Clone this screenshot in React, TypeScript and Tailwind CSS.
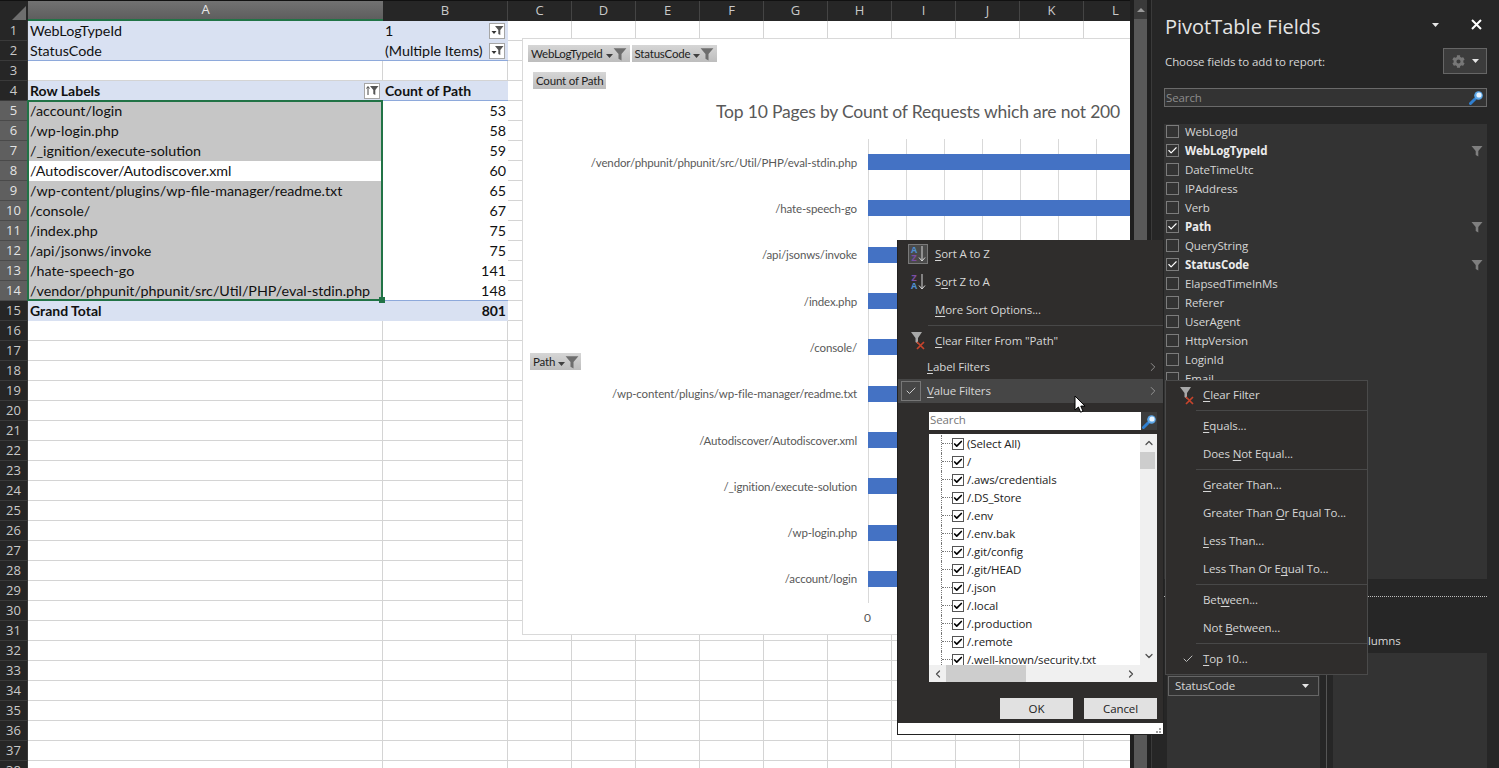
import React from "react";
import { ChevronRight, ChevronUp, ChevronDown, ChevronLeft, Check } from "lucide-react";
import { FaCog } from "react-icons/fa";

const UI = "font-['Open_Sans',sans-serif]";
const SHEET = "font-[Lato,sans-serif]";

const Acc = ({ s }: { s: string }) => {
  const [a, b] = s.split("&");
  if (b === undefined) return <>{a}</>;
  return (
    <>
      {a}
      <u className="underline-offset-2">{b[0]}</u>
      {b.slice(1)}
    </>
  );
};

const Funnel = ({ size = 12, color = "#7f7f7f" }: { size?: number; color?: string }) => (
  <svg width={size} height={size} viewBox="0 0 12 12" className="shrink-0">
    <path d="M0.5 1h11L7.3 6v5.5L4.7 10V6z" fill={color} />
  </svg>
);

const Caret = ({ color = "#404040", w = 7 }: { color?: string; w?: number }) => (
  <svg width={w} height={4} viewBox="0 0 7 4" className="shrink-0">
    <path d="M0 0h7L3.5 4z" fill={color} />
  </svg>
);

const ClearFunnel = () => (
  <svg width={16} height={18} viewBox="0 0 16 18" className="shrink-0">
    <path d="M0 0h11L7 6v6L4.5 10V6z" fill="#a8a8a8" />
    <path d="M6 10l7 7M13 10l-7 7" stroke="#c8442c" strokeWidth="1.7" />
  </svg>
);

const Magnifier = () => (
  <svg width={15} height={15} viewBox="0 0 15 15" className="shrink-0">
    <path d="M1.5 13.5L6 9" stroke="#2f7fd0" strokeWidth="3" strokeLinecap="round" />
    <circle cx="9.5" cy="5.5" r="4.3" fill="#5aa5e6" />
    <circle cx="10" cy="5" r="2.6" fill="#e8f4ff" />
  </svg>
);

const FilterBtn = ({ sorted }: { sorted?: boolean }) => (
  <div className="w-[16px] h-[16px] shrink-0 bg-white border border-[#a6a6a6] flex items-center justify-center">
    {sorted ? (
      <svg width={13} height={11} viewBox="0 0 13 11">
        <path d="M2 10V2M0.5 3.5L2 1.5l1.5 2" stroke="#444" fill="none" strokeWidth="1" />
        <path d="M4 1h8.5L9.3 5v5L7.3 9V5z" fill="#555" />
      </svg>
    ) : (
      <svg width={13} height={11} viewBox="0 0 13 11">
        <path d="M0.5 6h5L3 9z" fill="#333" />
        <path d="M4 1h8.5L9.3 5v5L7.3 9V5z" fill="#555" />
      </svg>
    )}
  </div>
);

const colLetters = ["C", "D", "E", "F", "G", "H", "I", "J", "K", "L"];
const rows = Array.from({ length: 38 }, (_, i) => i + 1);
const labels: Record<number, [string, string]> = {
  5: ["/account/login", "53"],
  6: ["/wp-login.php", "58"],
  7: ["/_ignition/execute-solution", "59"],
  8: ["/Autodiscover/Autodiscover.xml", "60"],
  9: ["/wp-content/plugins/wp-file-manager/readme.txt", "65"],
  10: ["/console/", "67"],
  11: ["/index.php", "75"],
  12: ["/api/jsonws/invoke", "75"],
  13: ["/hate-speech-go", "141"],
  14: ["/vendor/phpunit/phpunit/src/Util/PHP/eval-stdin.php", "148"],
};

const PIVOT = "bg-[#d9e1f2]";
const GRID = "border-[#d4d4d4]";

function SheetRow({ n }: { n: number }) {
  const selected = n >= 5 && n <= 14;
  let a: React.ReactNode = null;
  let b: React.ReactNode = null;
  let aCls = `bg-white border-r border-b ${GRID}`;
  let bCls = `bg-white border-r border-b ${GRID}`;
  if (n === 1 || n === 2) {
    aCls = `${PIVOT} ${n === 2 ? "border-b border-[#8ea9db]" : ""}`;
    bCls = `${PIVOT} ${n === 2 ? "border-b border-[#8ea9db]" : ""}`;
    a = n === 1 ? "WebLogTypeId" : "StatusCode";
    b = (
      <div className="flex items-center justify-between pr-[1px]">
        <span>{n === 1 ? "1" : "(Multiple Items)"}</span>
        <FilterBtn />
      </div>
    );
  } else if (n === 4) {
    aCls = `${PIVOT} border-b border-[#8ea9db] font-bold text-[14px]`;
    bCls = `${PIVOT} border-b border-[#8ea9db] font-bold text-[14px]`;
    a = (
      <div className="flex items-center justify-between pr-[1px]">
        <span>Row Labels</span>
        <FilterBtn sorted />
      </div>
    );
    b = "Count of Path";
  } else if (labels[n]) {
    aCls = n === 8 ? "bg-white" : "bg-[#c6c6c6]";
    bCls = n === 14 ? "bg-white border-b border-[#8ea9db]" : "bg-white";
    a = labels[n][0];
    b = <div className="text-right">{labels[n][1]}</div>;
  } else if (n === 15) {
    aCls = `${PIVOT} font-bold text-[14px]`;
    bCls = `${PIVOT} font-bold text-[14px]`;
    a = "Grand Total";
    b = <div className="text-right">801</div>;
  }
  return (
    <div className="flex h-[20px] shrink-0">
      <div
        className={`w-[28px] shrink-0 flex items-center justify-center border-b border-r text-[13px] ${UI} ${
          selected
            ? "bg-[#5f5f5f] text-[#e4e4e4] border-[#4a4a4a]"
            : "bg-[#262626] text-[#c9c9c9] border-[#3a3a3a]"
        }`}
      >
        {n}
      </div>
      <div className={`w-[355px] shrink-0 px-[2px] leading-[19px] whitespace-nowrap overflow-hidden ${aCls}`}>{a}</div>
      <div className={`w-[125px] shrink-0 px-[2px] leading-[19px] whitespace-nowrap overflow-hidden ${bCls}`}>{b}</div>
      {colLetters.map((c) => (
        <div key={c} className={`w-[64px] shrink-0 bg-white border-r border-b ${GRID}`} />
      ))}
    </div>
  );
}

const PivotBtn = ({ label, filter = true, cls = "" }: { label: string; filter?: boolean; cls?: string }) => (
  <div
    className={`h-[17px] flex items-center bg-gradient-to-b from-[#d6d6d6] to-[#bdbdbd] text-[11.5px] tracking-[-0.2px] text-[#222] px-[3px] whitespace-nowrap ${cls}`}
  >
    <span>{label}</span>
    {filter && (
      <>
        <span className="ml-[3px] mt-[5px]">
          <Caret />
        </span>
        <Funnel size={14} color="#6e6e6e" />
      </>
    )}
  </div>
);

const chartData: [string, number][] = [
  ["/vendor/phpunit/phpunit/src/Util/PHP/eval-stdin.php", 148],
  ["/hate-speech-go", 141],
  ["/api/jsonws/invoke", 75],
  ["/index.php", 75],
  ["/console/", 67],
  ["/wp-content/plugins/wp-file-manager/readme.txt", 65],
  ["/Autodiscover/Autodiscover.xml", 60],
  ["/_ignition/execute-solution", 59],
  ["/wp-login.php", 58],
  ["/account/login", 53],
];

function Chart() {
  return (
    <div className={`absolute left-[522px] top-[38px] w-[620px] h-[597px] bg-white border border-[#d9d9d9] ${SHEET}`}>
      <div className="flex gap-[2px] pl-[5px] pt-[6px]">
        <PivotBtn label="WebLogTypeId" />
        <PivotBtn label="StatusCode" />
      </div>
      <div className="flex pl-[10px] mt-[10px]">
        <PivotBtn label="Count of Path" filter={false} />
      </div>
      <div className="mt-[10px] h-[26px] w-[597px] text-right text-[17.5px] tracking-[-0.2px] leading-[26px] text-[#595959] whitespace-nowrap">
        Top 10 Pages by Count of Requests which are not 200
      </div>
      <div className="relative mt-[14px]">
        <div className="absolute left-[345px] top-0 h-[464px] flex">
          {Array.from({ length: 8 }, (_, i) => (
            <div key={i} className="w-[38px] border-l border-[#d9d9d9]" />
          ))}
        </div>
        <div>
          {chartData.map(([l, v]) => (
            <div key={l} className="relative flex items-center h-[46.33px]">
              <div className="w-[334px] shrink-0 text-right text-[11.5px] tracking-[-0.14px] text-[#595959] whitespace-nowrap">{l}</div>
              <div className="ml-[11px] h-[16px] bg-[#4472c4]" style={{ width: v * 2.45 }} />
            </div>
          ))}
        </div>
        <div className="pl-[341px] pt-[8px] text-[12px] leading-[16px] text-[#595959]">0</div>
      </div>
      <PivotBtn label="Path" cls="absolute left-[7px] top-[314px] w-[51px]" />
    </div>
  );
}

function Sheet() {
  return (
    <div className={`relative w-[1130px] h-[768px] shrink-0 overflow-hidden text-[14.3px] text-[#111] ${SHEET}`}>
      <div className={`flex h-[21px] shrink-0 border-t border-[#111] text-[13px] ${UI}`}>
        <div className="w-[28px] shrink-0 bg-[#262626] flex items-end justify-end pr-[2px] pb-[1px]">
          <svg width={14} height={14} viewBox="0 0 14 14">
            <path d="M14 0V14H0z" fill="#6e6e6e" />
          </svg>
        </div>
        <div className="w-[355px] shrink-0 bg-gradient-to-b from-[#727272] to-[#5e5e5e] border-b-2 border-[#217346] text-[#e8e8e8] flex items-center justify-center">
          A
        </div>
        <div className="w-[125px] shrink-0 bg-[#262626] border-r border-[#444] text-[#c9c9c9] flex items-center justify-center">
          B
        </div>
        {colLetters.map((c) => (
          <div key={c} className="w-[64px] shrink-0 bg-[#262626] border-r border-[#444] text-[#c9c9c9] flex items-center justify-center">
            {c}
          </div>
        ))}
      </div>
      {rows.map((n) => (
        <SheetRow key={n} n={n} />
      ))}
      <div className="absolute left-[27px] top-[100px] w-[356px] h-[201px] border-2 border-[#217346]">
        <div className="absolute right-[-4px] bottom-[-4px] w-[6px] h-[6px] bg-[#217346]" />
      </div>
      <Chart />
    </div>
  );
}

const MenuItem = ({ s, h = 28, pl = 37, icon, arrow, cls = "" }: { s: string; h?: number; pl?: number; icon?: React.ReactNode; arrow?: boolean; cls?: string }) => (
  <div className={`relative flex items-center shrink-0 ${cls}`} style={{ height: h, paddingLeft: pl }}>
    {icon}
    <span className="whitespace-nowrap">
      <Acc s={s} />
    </span>
    {arrow && <ChevronRight size={14} strokeWidth={1.2} className="absolute right-[3px] text-[#b5b5b5]" />}
  </div>
);

const SortIcon = ({ top, bottom, boxed }: { top: [string, string]; bottom: [string, string]; boxed?: boolean }) => (
  <div
    className={`absolute left-[10px] top-[4px] w-[20px] h-[20px] flex items-center justify-center ${
      boxed ? "border border-[#7a7a7a] bg-[#4a4a4a]" : ""
    }`}
  >
    <svg width={18} height={18} viewBox="0 0 18 18">
      <text x="5" y="8" fontSize="9" fontWeight="700" textAnchor="middle" fill={top[1]}>{top[0]}</text>
      <text x="5" y="16" fontSize="9" fontWeight="700" textAnchor="middle" fill={bottom[1]}>{bottom[0]}</text>
      <path d="M13 1V16M10 12.5L13 16l3-3.5" stroke="#d6d6d6" fill="none" strokeWidth="1" />
    </svg>
  </div>
);

const filterItems = ["(Select All)", "/", "/.aws/credentials", "/.DS_Store", "/.env", "/.env.bak", "/.git/config", "/.git/HEAD", "/.json", "/.local", "/.production", "/.remote", "/.well-known/security.txt"];

function CheckList() {
  return (
    <div className="ml-[31px] mt-[4px] w-[228px] h-[248px] bg-white relative overflow-hidden text-[#222]">
      <div className="h-[231px] overflow-hidden pt-[1px]">
        {filterItems.map((t) => (
          <div key={t} className="flex items-center h-[18px] pl-[12px]">
            <div className="w-[11px] h-full border-l border-dotted border-[#777] flex flex-col">
              <div className="h-[9px] border-b border-dotted border-[#777]" />
            </div>
            <div className="w-[12px] h-[12px] border border-[#555] flex items-center justify-center shrink-0">
              <Check size={10} strokeWidth={4} className="text-black" />
            </div>
            <span className="ml-[3px] whitespace-nowrap">{t}</span>
          </div>
        ))}
      </div>
      <div className="absolute right-0 top-0 w-[17px] h-[231px] bg-[#f0f0f0] flex flex-col items-center justify-between py-[3px]">
        <ChevronUp size={12} strokeWidth={2.5} className="text-[#505050]" />
        <ChevronDown size={12} strokeWidth={2.5} className="text-[#505050]" />
      </div>
      <div className="absolute right-[2px] top-[18px] w-[15px] h-[17px] bg-[#cdcdcd]" />
      <div className="absolute left-0 right-0 top-[231px] h-[17px] bg-[#f0f0f0] flex items-center justify-between px-[3px]">
        <ChevronLeft size={12} strokeWidth={2.5} className="text-[#505050]" />
        <ChevronRight size={12} strokeWidth={2.5} className="text-[#505050] mr-[17px]" />
      </div>
      <div className="absolute left-[17px] top-[231px] w-[80px] h-[17px] bg-[#cdcdcd]" />
    </div>
  );
}

function FilterMenu() {
  return (
    <div className={`absolute z-10 left-[897px] top-[240px] w-[267px] h-[495px] bg-[#2f2d2c] border-b border-x border-[#222] flex flex-col text-[11.5px] tracking-[-0.1px] text-[#d6d6d6] ${UI}`}>
      <MenuItem s="&Sort A to Z" icon={<SortIcon boxed top={["A", "#4f8fd0"]} bottom={["Z", "#7b4ea3"]} />} />
      <MenuItem s="S&ort Z to A" icon={<SortIcon top={["Z", "#7b4ea3"]} bottom={["A", "#4f8fd0"]} />} />
      <MenuItem s="&More Sort Options..." />
      <div className="h-px ml-[30px] mt-[1px] bg-[#484848] shrink-0" />
      <MenuItem
        s='&Clear Filter From "Path"'
        icon={
          <span className="absolute left-[13px] top-[5px]">
            <ClearFunnel />
          </span>
        }
        cls="mt-[1px]"
      />
      <MenuItem s="&Label Filters" h={24} pl={29} arrow />
      <MenuItem
        s="&Value Filters"
        h={24}
        pl={29}
        arrow
        cls="bg-[#464646]"
        icon={
          <span className="absolute left-[3px] top-[2px] w-[20px] h-[20px] border border-[#777] flex items-center justify-center">
            <Check size={12} strokeWidth={2} className="text-[#cfcfcf]" />
          </span>
        }
      />
      <div className="ml-[31px] mt-[9px] w-[228px] h-[18px] flex bg-white shrink-0">
        <span className="flex-1 pl-[1px] text-[#777] leading-[16px]">Search</span>
        <div className="w-[16px] h-[18px] bg-[#3d3d3d] flex items-center justify-center">
          <Magnifier />
        </div>
      </div>
      <CheckList />
      <div className="flex justify-end gap-[11px] mr-[6px] mt-[16px] text-[#222]">
        <div className="w-[73px] h-[21px] pt-px bg-[#e1e1e1] flex items-center justify-center">OK</div>
        <div className="w-[73px] h-[21px] pt-px bg-[#e1e1e1] flex items-center justify-center">Cancel</div>
      </div>
      <div className="mt-auto h-[11px] bg-white flex items-end justify-end pr-[2px] pb-[1px]">
        <div className="grid grid-cols-2 gap-[1px]">
          <span className="w-[2px] h-[2px]" />
          <span className="w-[2px] h-[2px] bg-[#a0a0a0]" />
          <span className="w-[2px] h-[2px] bg-[#a0a0a0]" />
          <span className="w-[2px] h-[2px] bg-[#a0a0a0]" />
        </div>
      </div>
    </div>
  );
}

const Sep = ({ cls = "" }: { cls?: string }) => <div className={`h-px ml-[30px] bg-[#484848] shrink-0 ${cls}`} />;

function SubMenu() {
  return (
    <div className={`absolute z-20 left-[1165px] top-[380px] w-[203px] h-[295px] bg-[#2f2d2c] border border-[#4a4a4a] flex flex-col text-[11.5px] tracking-[-0.1px] text-[#d6d6d6] ${UI}`}>
      <MenuItem
        s="&Clear Filter"
        h={29}
        cls="pb-[2px]"
        icon={
          <span className="absolute left-[14px] top-[6px]">
            <ClearFunnel />
          </span>
        }
      />
      <Sep />
      <MenuItem s="&Equals..." cls="mt-px" />
      <MenuItem s="Does &Not Equal..." />
      <Sep cls="mt-px" />
      <MenuItem s="&Greater Than..." cls="mt-px" />
      <MenuItem s="Greater Than &Or Equal To..." />
      <MenuItem s="&Less Than..." />
      <MenuItem s="Less Than Or E&qual To..." />
      <Sep cls="mt-px" />
      <MenuItem s="Bet&ween..." cls="mt-px" />
      <MenuItem s="Not &Between..." />
      <Sep cls="mt-px" />
      <MenuItem
        s="&Top 10..."
        cls="mt-px"
        icon={<Check size={12} strokeWidth={2} className="absolute left-[16px] text-[#bdbdbd]" />}
      />
    </div>
  );
}

const fields: [string, boolean][] = [
  ["WebLogId", false],
  ["WebLogTypeId", true],
  ["DateTimeUtc", false],
  ["IPAddress", false],
  ["Verb", false],
  ["Path", true],
  ["QueryString", false],
  ["StatusCode", true],
  ["ElapsedTimeInMs", false],
  ["Referer", false],
  ["UserAgent", false],
  ["HttpVersion", false],
  ["LoginId", false],
  ["Email", false],
];

function Panel() {
  return (
    <div className={`w-[347px] h-[768px] shrink-0 px-[12px] bg-[#262626] text-[#d6d6d6] text-[11.5px] tracking-[-0.1px] flex flex-col overflow-hidden ${UI}`}>
      <div className="h-[46px] pt-[8px] shrink-0 flex items-center justify-between">
        <span className="text-[20px] tracking-normal text-[#e4e4e4] pl-[1px]">PivotTable Fields</span>
        <div className="flex items-center gap-[31px] pr-[5px] mb-[5px]">
          <Caret color="#e6e6e6" w={9} />
          <svg width={11} height={11} viewBox="0 0 11 11">
            <path d="M1 1l9 9M10 1l-9 9" stroke="#fff" strokeWidth="2" />
          </svg>
        </div>
      </div>
      <div className="h-[30px] shrink-0 flex items-center justify-between pl-[1px]">
        <span className="mt-[1px]">Choose fields to add to report:</span>
        <div className="w-[44px] h-[26px] bg-[#3c3c3c] border border-[#666] flex items-center justify-center gap-[7px]">
          <FaCog size={13} className="text-[#777]" />
          <Caret color="#e6e6e6" />
        </div>
      </div>
      <div className="mt-[12px] h-[19px] shrink-0 border border-[#6a6a6a] bg-[#333] flex items-center justify-between pl-[1px] pr-[2px] text-[#8c8c8c]">
        <span>Search</span>
        <Magnifier />
      </div>
      <div className="mt-[17px] h-[455px] shrink-0 bg-[#333] overflow-hidden">
        <div className="-mt-[2px]">
          {fields.map(([f, on]) => (
            <div key={f} className="flex items-center h-[19px] pl-[2px] pr-[4px]">
              <div className="w-[13px] h-[13px] border border-[#7c7c7c] flex items-center justify-center shrink-0">
                {on && <Check size={11} strokeWidth={2.5} className="text-white" />}
              </div>
              <span className={`ml-[6px] flex-1 ${on ? "font-bold text-[#ececec]" : ""}`}>{f}</span>
              {on && <Funnel size={12} color="#7f7f7f" />}
            </div>
          ))}
        </div>
      </div>
      <div className="mt-[17px] h-px shrink-0 border-t border-dotted border-[#bdbdbd]" />
      <div className="mt-[34px] h-[22px] pb-[2px] shrink-0 flex items-center">
        <span className="ml-[190px]">Columns</span>
      </div>
      <div className="flex-1 flex pl-[3px]">
        <div className="w-[153px] bg-[#333] pt-[23px]">
          <div className="h-[20px] mx-[1px] border border-[#666] flex items-center justify-between pl-[6px] pr-[9px]">
            <span>StatusCode</span>
            <Caret color="#e6e6e6" />
          </div>
        </div>
        <div className="w-[13px] relative">
          <div className="ml-[6px] w-px h-full bg-[#555]" />
        </div>
        <div className="flex-1 bg-[#333]" />
      </div>
    </div>
  );
}

function Scrollbar() {
  return (
    <div className="w-[22px] h-[768px] shrink-0 bg-[#1f1f1f] flex pl-[4px]">
      <div className="w-[13px] h-full bg-[#585858] flex flex-col items-center">
        <div className="h-[19px] w-full bg-[#3a3a3a] flex items-center justify-center">
          <svg width={8} height={4} viewBox="0 0 8 4">
            <path d="M0 4h8L4 0z" fill="#9a9a9a" />
          </svg>
        </div>
      </div>
      <div className="ml-[4px] w-px h-full bg-[#3a3a3a]" />
    </div>
  );
}

export default function App() {
  return (
    <div className="relative flex w-[1499px] h-[768px] overflow-hidden bg-[#1f1f1f]">
      <Sheet />
      <Scrollbar />
      <Panel />
      <FilterMenu />
      <SubMenu />
      <svg width={13} height={19} viewBox="0 0 13 19" className="absolute z-30 left-[1074px] top-[395px]">
        <path d="M1 1v14l3.4-3 2.2 5.2 2.4-1-2.2-5.1H11z" fill="#fff" stroke="#000" strokeWidth="1" />
      </svg>
    </div>
  );
}
